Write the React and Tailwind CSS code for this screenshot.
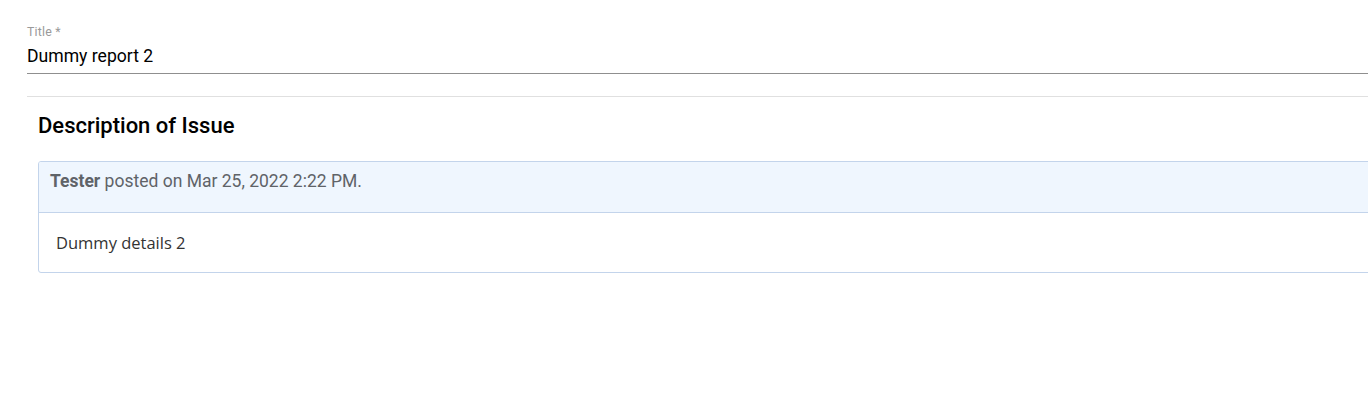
export default function App() {
  return (
    <div className="w-[1368px] h-[409px] overflow-hidden bg-white" style={{ fontFamily: "Roboto, 'Liberation Sans', sans-serif" }}>
      <div className="w-[1420px] pl-[27px] pt-[24px]">
        <div className="flex flex-col">
          <label className="text-[12.4px] leading-[16px] text-[#9a9a9a] tracking-[0.2px]">Title *</label>
          <div className="mt-[5px] pb-[5px] border-b border-[#8f8f8f] text-[17.6px] leading-[23px] text-black">Dummy report 2</div>
        </div>
        <div className="mt-[22px] border-t border-[#e0e0e0]"></div>
        <div className="pl-[11px] pt-[14px]">
          <h2 className="text-[22px] leading-[29px] font-medium text-black">Description of Issue</h2>
          <div className="mt-[21px] border border-[#c3d4eb] rounded-[3px] overflow-hidden">
            <div className="h-[51px] bg-[#eff6fe] border-b border-[#c3d4eb] px-[11px] pt-[8px] text-[17.5px] leading-[23px] text-[#5f6368]">
              <span className="font-bold">Tester</span> posted on Mar 25, 2022 2:22 PM.
            </div>
            <div className="h-[59px] px-[17px] pt-[18px] text-[16.5px] leading-[23px] text-[#333333]" style={{ fontFamily: "'Open Sans', sans-serif" }}>
              Dummy details 2
            </div>
          </div>
        </div>
      </div>
    </div>
  );
}
